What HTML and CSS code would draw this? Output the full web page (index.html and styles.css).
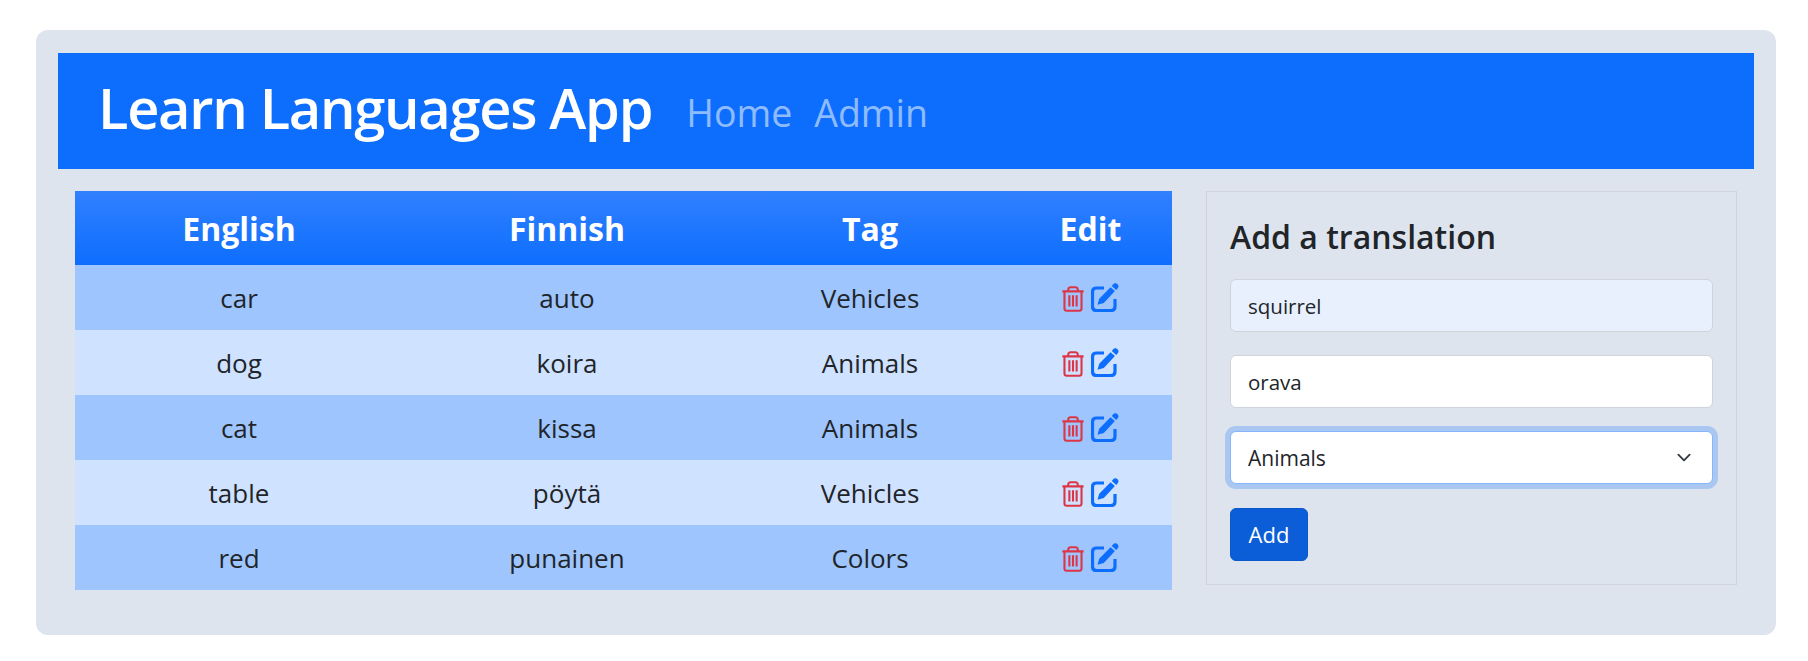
FILE: index.html
```html
<!DOCTYPE html>
<html lang="en">
<head>
    <meta charset="UTF-8">
    <meta name="viewport" content="width=device-width, initial-scale=1.0">
    <title>Learn Languages App</title>
    <link rel="stylesheet" href="styles.css">
</head>
<body>
    <svg class="icon-defs" width="0" height="0">
        <symbol id="icon-trash" viewBox="0 0 22 25">
            <path d="M0.8 5.2h20.4M6.4 5V3.6Q6.4 1.2 8.8 1.2h4.4q2.4 0 2.4 2.4V5M2.8 5.2V21.6q0 2.2 2.2 2.2h12q2.2 0 2.2-2.2V5.2M7.5 9v10.800M11 9v10.800M14.500 9v10.800" fill="none" stroke="currentColor" stroke-width="2"/>
        </symbol>
        <symbol id="icon-edit" viewBox="0 0 28 29">
            <path d="M13 5H5.500Q1.500 5 1.500 9V23.500Q1.500 27.500 5.500 27.500H20Q24 27.500 24 23.500V16" fill="none" stroke="currentColor" stroke-width="3.200"/>
            <path d="M22 1.500a2.900 2.900 0 0 1 5.200 0.800q0.700 1.500-0.300 2.800L25.200 7 20.800 3zM19.600 4.300l4.300 3.700L12.800 20 6.500 21.800l1.700-6z" fill="currentColor"/>
        </symbol>
    </svg>
    <div class="app">
        <nav class="navbar">
            <a class="brand" href="#">Learn Languages App</a>
            <a class="nav-link" href="#">Home</a>
            <a class="nav-link" href="#">Admin</a>
        </nav>
        <div class="content">
            <table class="words">
                <thead>
                    <tr>
                        <th class="col-english">English</th>
                        <th class="col-finnish">Finnish</th>
                        <th class="col-tag">Tag</th>
                        <th>Edit</th>
                    </tr>
                </thead>
                <tbody>
                    <tr>
                        <td>car</td>
                        <td>auto</td>
                        <td>Vehicles</td>
                        <td><div class="actions"><svg class="trash"><use href="#icon-trash"/></svg><svg class="edit"><use href="#icon-edit"/></svg></div></td>
                    </tr>
                    <tr>
                        <td>dog</td>
                        <td>koira</td>
                        <td>Animals</td>
                        <td><div class="actions"><svg class="trash"><use href="#icon-trash"/></svg><svg class="edit"><use href="#icon-edit"/></svg></div></td>
                    </tr>
                    <tr>
                        <td>cat</td>
                        <td>kissa</td>
                        <td>Animals</td>
                        <td><div class="actions"><svg class="trash"><use href="#icon-trash"/></svg><svg class="edit"><use href="#icon-edit"/></svg></div></td>
                    </tr>
                    <tr>
                        <td>table</td>
                        <td>pöytä</td>
                        <td>Vehicles</td>
                        <td><div class="actions"><svg class="trash"><use href="#icon-trash"/></svg><svg class="edit"><use href="#icon-edit"/></svg></div></td>
                    </tr>
                    <tr>
                        <td>red</td>
                        <td>punainen</td>
                        <td>Colors</td>
                        <td><div class="actions"><svg class="trash"><use href="#icon-trash"/></svg><svg class="edit"><use href="#icon-edit"/></svg></div></td>
                    </tr>
                </tbody>
            </table>
            <form class="add-form">
                <h2>Add a translation</h2>
                <input type="text" class="field autofilled" value="squirrel">
                <input type="text" class="field" value="orava">
                <select class="field select-focus">
                    <option>Animals</option>
                </select>
                <button type="button" class="add-btn">Add</button>
            </form>
        </div>
    </div>
</body>
</html>
```

FILE: styles.css
```css
* {
    box-sizing: border-box;
}
body {
    font-family: 'Open Sans', 'Noto Sans', sans-serif;
    background-color: #fff;
    margin: 0;
    padding: 30px 32px 26px 36px;
    color: #212529;
}
.icon-defs {
    display: block;
    height: 0;
}
.app {
    background: #dee4ee;
    border-radius: 12px;
    height: 605px;
    padding: 23px 22px;
}
.navbar {
    background: #0d6efd;
    height: 116px;
    padding: 0 40px 9px;
    display: flex;
    align-items: center;
}
.brand {
    color: #fff;
    font-size: 56px;
    font-weight: 600;
    text-decoration: none;
    margin-right: 34px;
    letter-spacing: -1.3px;
}
.nav-link {
    color: rgba(255, 255, 255, 0.55);
    font-size: 37.500px;
    text-decoration: none;
    margin-right: 22px;
    margin-top: 11px;
}
.content {
    display: flex;
    align-items: flex-start;
    gap: 34px;
    padding: 22px 17px;
}
.words {
    width: 1097px;
    flex: none;
    border-collapse: collapse;
    table-layout: fixed;
    text-align: center;
    font-size: 26px;
}
.col-english, .col-finnish {
    width: 328px;
}
.col-tag {
    width: 278px;
}
th {
    height: 74px;
    color: #fff;
    font-size: 32px;
    font-weight: 700;
    background: linear-gradient(#3180ff, #0d6efd);
}
td {
    height: 65px;
    padding: 0;
}
tbody tr:nth-child(odd) td {
    background: #9ec5fe;
}
tbody tr:nth-child(even) td {
    background: #cfe2ff;
}
.actions {
    display: flex;
    justify-content: center;
    align-items: center;
    gap: 6px;
    padding: 2px 1px 0 0;
}
.trash {
    width: 24px;
    height: 26px;
    color: #dc3545;
}
.edit {
    width: 28px;
    height: 29px;
    color: #0d6efd;
    margin-bottom: 3px;
}
.add-form {
    width: 531px;
    height: 394px;
    flex: none;
    border: 1px solid #ced4da;
    padding: 23px;
    display: flex;
    flex-direction: column;
    align-items: flex-start;
}
h2 {
    margin: 3px 0 24px;
    font-size: 32px;
    font-weight: 600;
    line-height: 37px;
}
.field {
    display: block;
    width: 100%;
    height: 53px;
    margin-bottom: 23px;
    padding: 0 17px;
    border: 1px solid #ced4da;
    border-radius: 6px;
    background-color: #fff;
    color: #212529;
    font-family: inherit;
    font-size: 20.500px;
    appearance: none;
}
.autofilled {
    background-color: #e8f0fe;
}
.select-focus {
    font-size: 21px;
    margin-bottom: 24px;
    border-color: #86b7fe;
    box-shadow: 0 0 0 5px rgba(13, 110, 253, 0.25);
    background-image: url("data:image/svg+xml,%3csvg xmlns='http://www.w3.org/2000/svg' viewBox='0 0 16 16'%3e%3cpath fill='none' stroke='%23343a40' stroke-linecap='round' stroke-linejoin='round' stroke-width='2' d='M2 5l6 6 6-6'/%3e%3c/svg%3e");
    background-repeat: no-repeat;
    background-position: right 18px center;
    background-size: 20px 15px;
}
.add-btn {
    width: 78px;
    height: 53px;
    padding: 0 0 2px;
    border: 1px solid #0a58ca;
    border-radius: 6px;
    background: #0b5ed7;
    color: #fff;
    font-family: inherit;
    font-size: 22px;
}
```
